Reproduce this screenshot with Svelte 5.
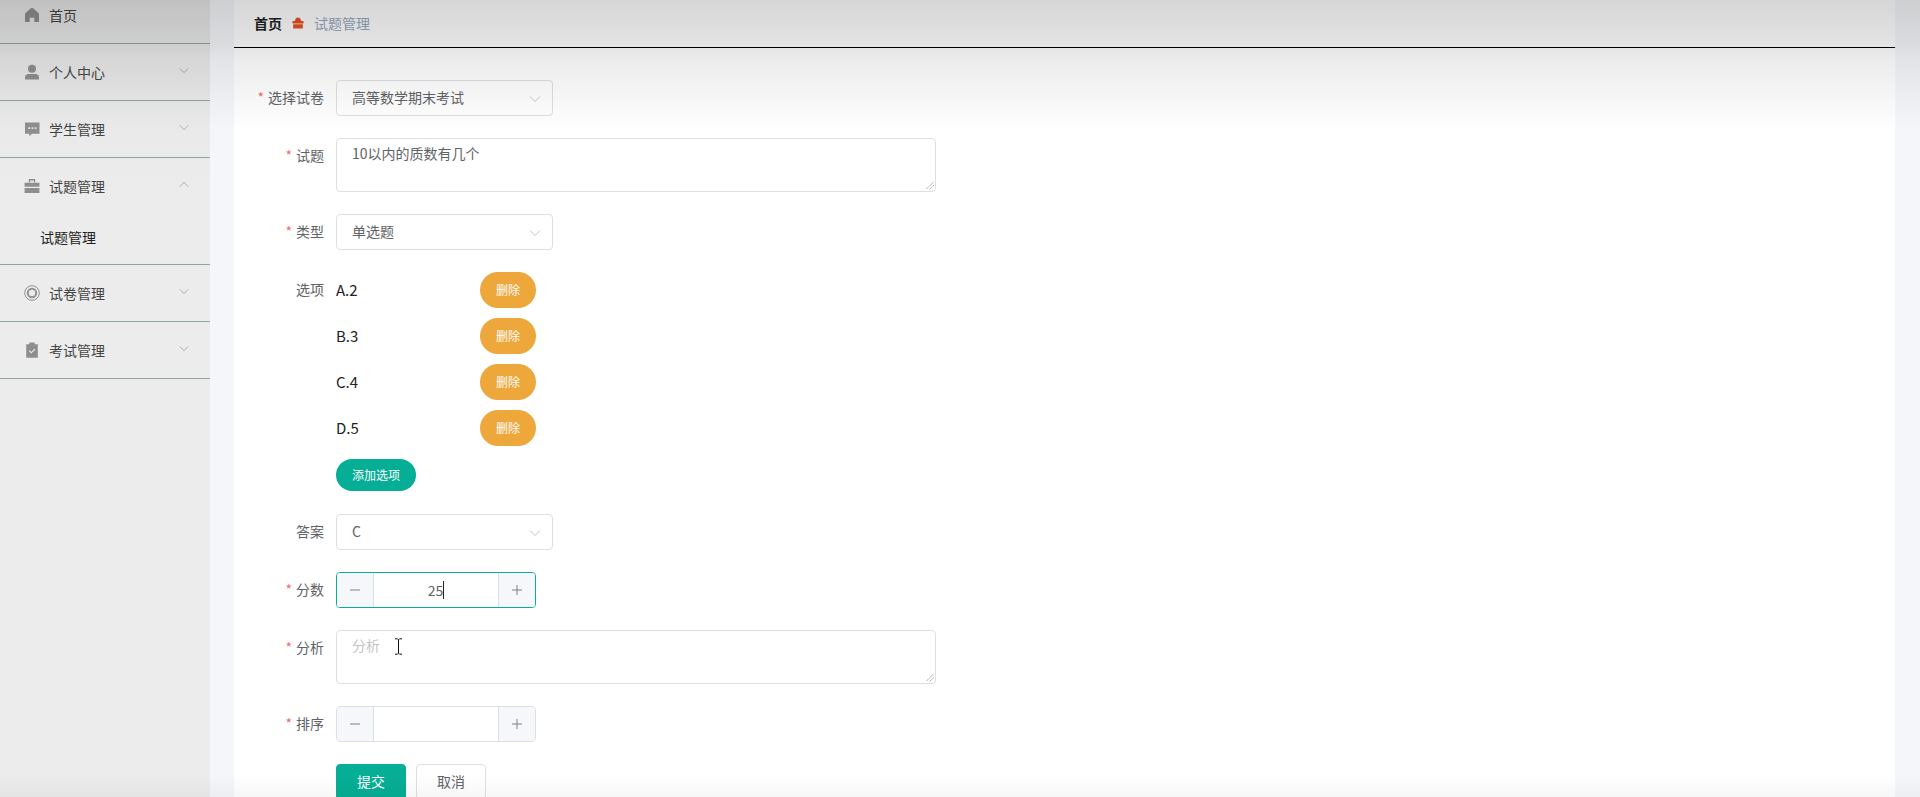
<script>
	const menu = [
		{ name: '个人中心', icon: 'user' },
		{ name: '学生管理', icon: 'chat' },
		{ name: '试题管理', icon: 'case', open: true, children: ['试题管理'] },
		{ name: '试卷管理', icon: 'help' },
		{ name: '考试管理', icon: 'claim' }
	];
	const options = ['A.2', 'B.3', 'C.4', 'D.5'];
</script>

{#snippet icon(kind)}
	<svg class="menu-icon" viewBox="0 0 16 16">
		{#if kind === 'home'}
			<path d="M8 1C7.200 1 6.600 1.400 6 1.900L1 6.400V15h4.700v-4.200h4.600V15H15V6.400L10 1.900C9.400 1.400 8.800 1 8 1z" />
		{:else if kind === 'user'}
			<circle cx="8" cy="4.700" r="4" />
			<path d="M1 15.500v-2.300C1 11 2.800 10 5 10h6c2.200 0 4 1 4 3.200v2.300z" />
		{:else if kind === 'chat'}
			<path fill-rule="evenodd" d="M1 1.500h14.500v11.200H8L5.300 15.500v-2.800H1zM4.300 6.300v1.700H6V6.300zm3.200 0v1.700h1.700V6.300zm3.200 0v1.700h1.700V6.300z" />
		{:else if kind === 'case'}
			<path d="M4.800 1h6.400v3.200H9.800V2.400H6.200v1.800H4.800zM.6 4.800h14.800v4H.6zM.6 10h14.800v5H.6z" />
		{:else if kind === 'help'}
			<circle cx="8" cy="8" r="7.300" fill="none" stroke="#929292" stroke-width="1" />
			<circle cx="8" cy="8" r="4.200" fill="none" stroke="#929292" stroke-width="2" />
		{:else}
			<path fill-rule="evenodd" d="M5.300 .5h5.400v1.800h3.100v13.400H2.200V2.300h3.100zM4.800 9l2.500 2.500 4-4-.8-.8-3.200 3.200-1.700-1.700z" />
		{/if}
	</svg>
{/snippet}

{#snippet arrow(up)}
	<svg class="arrow" class:up viewBox="0 0 12 8">
		<path d="M1 1.500 6 6.500 11 1.500" />
	</svg>
{/snippet}

{#snippet select(value)}
	<div class="select">
		<span>{value}</span>
		<svg class="select-arrow" viewBox="0 0 12 8"><path d="M1 1.500 6 6.500 11 1.500" /></svg>
	</div>
{/snippet}

{#snippet stepper(value, focused)}
	<div class="stepper" class:focused>
		<span class="step">
			<svg viewBox="0 0 12 12"><path d="M1 6h10" /></svg>
		</span>
		<span class="step-value">
			{value}{#if focused}<i class="caret"></i>{/if}
		</span>
		<span class="step">
			<svg viewBox="0 0 12 12"><path d="M1 6h10M6 1v10" /></svg>
		</span>
	</div>
{/snippet}

<div class="page">
	<aside class="sidebar">
		<div class="menu-row first">
			{@render icon('home')}
			<span>首页</span>
		</div>
		{#each menu as item}
			<div class="menu-group">
				<div class="menu-row">
					{@render icon(item.icon)}
					<span>{item.name}</span>
					{@render arrow(item.open)}
				</div>
				{#if item.children}
					{#each item.children as child}
						<div class="submenu">{child}</div>
					{/each}
				{/if}
			</div>
		{/each}
	</aside>

	<main class="main">
		<header class="crumbs">
			<b>首页</b>
			<svg class="crumb-icon" viewBox="0 0 12 12">
				<path d="M3 4C3 1.600 4.400 .4 6 .4S9 1.600 9 4h2.500v2.400H.5V4zM1.200 7.300h9.600V11.600H1.200z" />
			</svg>
			<span>试题管理</span>
		</header>

		<form class="form">
			<div class="row">
				<div class="label"><em>*</em>选择试卷</div>
				{@render select('高等数学期末考试')}
			</div>
			<div class="row">
				<div class="label"><em>*</em>试题</div>
				<div class="textarea">10以内的质数有几个
					<svg class="resize" viewBox="0 0 10 10"><path d="M9.500 1 1 9.500M9.500 5 5 9.500" /></svg>
				</div>
			</div>
			<div class="row">
				<div class="label"><em>*</em>类型</div>
				{@render select('单选题')}
			</div>
			<div class="row options">
				<div class="label">选项</div>
				<div class="option-list">
					{#each options as opt}
						<div class="option">
							<span>{opt}</span>
							<button type="button" class="btn-del">删除</button>
						</div>
					{/each}
					<button type="button" class="btn-add">添加选项</button>
				</div>
			</div>
			<div class="row">
				<div class="label">答案</div>
				{@render select('C')}
			</div>
			<div class="row">
				<div class="label"><em>*</em>分数</div>
				{@render stepper('25', true)}
			</div>
			<div class="row">
				<div class="label"><em>*</em>分析</div>
				<div class="textarea placeholder">分析
					<svg class="ibeam" viewBox="0 0 9 17"><path d="M1 .8h2.500L4.500 1.800 5.500 .8H8M4.500 1.800v13.400M1 16.200h2.500l1-1 1 1H8" /></svg>
					<svg class="resize" viewBox="0 0 10 10"><path d="M9.500 1 1 9.500M9.500 5 5 9.500" /></svg>
				</div>
			</div>
			<div class="row">
				<div class="label"><em>*</em>排序</div>
				{@render stepper('', false)}
			</div>
			<div class="row actions">
				<button type="button" class="btn-submit">提交</button>
				<button type="button" class="btn-cancel">取消</button>
			</div>
		</form>
	</main>

	<div class="shade"></div>
</div>

<style>
	:global(body) {
		margin: 0;
		overflow: hidden;
		background: #f3f5f8;
		font-family: "Noto Sans CJK SC", "Noto Sans", sans-serif;
	}

	.page {
		position: relative;
		display: flex;
		height: 797px;
		overflow: hidden;
		background: #f4f6f9;
	}

	/* grey fade that sits on top of everything */
	.shade {
		position: absolute;
		inset: 0;
		pointer-events: none;
		background:
			linear-gradient(to bottom, rgba(0, 0, 0, 0) 775px, rgba(0, 0, 0, 0.035) 797px),
			linear-gradient(to bottom, rgba(0, 0, 0, 0.16) 0, rgba(0, 0, 0, 0.105) 47px, rgba(0, 0, 0, 0.08) 57px, rgba(0, 0, 0, 0) 130px);
	}

	.sidebar {
		width: 210px;
		flex: none;
		background: linear-gradient(to bottom, #e6e6e6 0, #ececec 200px);
	}

	.menu-row {
		display: flex;
		align-items: center;
		height: 56px;
		padding: 0 20px 0 24px;
		border-bottom: 1px solid #8fa39f;
		font-size: 14px;
		color: #444;
	}

	.menu-row.first {
		margin-top: -13px;
	}

	.menu-group {
		border-bottom: 1px solid #8fa39f;
	}

	.menu-group .menu-row {
		border-bottom: 0;
	}

	.menu-icon {
		width: 16px;
		height: 16px;
		margin-right: 9px;
		fill: #8e8e8e;
		flex: none;
	}

	.arrow {
		width: 10px;
		height: 7px;
		margin-left: auto;
		margin-top: -3px;
		margin-right: 1px;
	}

	.arrow path {
		fill: none;
		stroke: #86a8a2;
		stroke-width: 1;
	}

	.arrow.up {
		transform: scaleY(-1);
	}

	.submenu {
		height: 50px;
		padding-left: 40px;
		line-height: 46px;
		font-size: 14px;
		color: #222;
	}

	.main {
		width: 1661px;
		flex: none;
		margin-left: 24px;
		background: #fff;
	}

	.crumbs {
		display: flex;
		align-items: center;
		box-sizing: border-box;
		height: 48px;
		padding: 0 0 2px 20px;
		border-bottom: 1px solid #000;
		font-size: 14px;
		color: #97a8be;
	}

	.crumbs b {
		color: #222;
		font-weight: 700;
	}

	.crumb-icon {
		width: 12px;
		height: 12px;
		margin: 0 10px;
		fill: #e8501f;
	}

	.form {
		padding-top: 32px;
		font-size: 14px;
		color: #606266;
	}

	.row {
		display: flex;
		margin-bottom: 22px;
	}

	.label {
		width: 90px;
		margin-right: 12px;
		height: 36px;
		line-height: 34px;
		text-align: right;
		flex: none;
	}

	.label em {
		color: #f56c6c;
		font-style: normal;
		margin-right: 4px;
	}

	.select {
		position: relative;
		display: flex;
		align-items: center;
		box-sizing: border-box;
		width: 217px;
		height: 36px;
		padding: 0 0 2px 15px;
		border: 1px solid #dcdfe6;
		border-radius: 4px;
		background: #fff;
	}

	.select-arrow {
		position: absolute;
		right: 11px;
		top: 14px;
		width: 12px;
		height: 8px;
	}

	.select-arrow path {
		fill: none;
		stroke: #c0c4cc;
		stroke-width: 1;
	}

	.textarea {
		position: relative;
		box-sizing: border-box;
		width: 600px;
		height: 54px;
		padding: 2px 15px;
		line-height: 24px;
		border: 1px solid #dcdfe6;
		border-radius: 4px;
		background: #fff;
	}

	.placeholder {
		color: #c4c4c4;
	}

	.resize {
		position: absolute;
		right: 1px;
		bottom: 1px;
		width: 9px;
		height: 9px;
	}

	.resize path {
		fill: none;
		stroke: #666;
		stroke-width: 1;
		stroke-dasharray: 1 1;
	}

	.ibeam {
		position: absolute;
		left: 57px;
		top: 7px;
		width: 9px;
		height: 17px;
	}

	.ibeam path {
		fill: #fff;
		stroke: #111;
		stroke-width: 1;
	}

	.options {
		margin-bottom: 23px;
	}

	.option-list {
		display: flex;
		flex-direction: column;
		align-items: flex-start;
	}

	.option {
		display: flex;
		align-items: center;
		height: 36px;
		margin-bottom: 10px;
		color: #222;
		font-size: 15px;
	}

	.option span {
		width: 144px;
		padding-bottom: 2px;
	}

	button {
		font: inherit;
		padding: 0 0 2px;
		cursor: pointer;
	}

	.btn-del {
		width: 56px;
		height: 36px;
		border: 0;
		border-radius: 18px;
		background: #eda73a;
		color: #fff;
		font-size: 12px;
	}

	.btn-add {
		width: 80px;
		height: 32px;
		margin-top: 3px;
		border: 0;
		border-radius: 16px;
		background: #05ae94;
		color: #fff;
		font-size: 12px;
	}

	.stepper {
		display: flex;
		box-sizing: border-box;
		width: 200px;
		height: 36px;
		border: 1px solid #dcdfe6;
		border-radius: 4px;
		overflow: hidden;
		background: #fff;
	}

	.stepper.focused {
		border-color: #05ae94;
	}

	.step {
		display: flex;
		align-items: center;
		justify-content: center;
		width: 36px;
		flex: none;
		background: #f5f7fa;
	}

	.step:first-child {
		border-right: 1px solid #dcdfe6;
	}

	.step:last-child {
		border-left: 1px solid #dcdfe6;
	}

	.step svg {
		width: 12px;
		height: 12px;
	}

	.step path {
		fill: none;
		stroke: #7d8087;
		stroke-width: 1;
	}

	.step-value {
		flex: 1;
		display: flex;
		align-items: center;
		justify-content: center;
		color: #606266;
	}

	.caret {
		display: block;
		width: 1px;
		height: 18px;
		background: #222;
	}

	.actions {
		padding-left: 102px;
		gap: 10px;
	}

	.btn-submit,
	.btn-cancel {
		width: 70px;
		height: 36px;
		border-radius: 4px;
		font-size: 14px;
	}

	.btn-submit {
		border: 1px solid #05ae94;
		background: #05ae94;
		color: #fff;
	}

	.btn-cancel {
		border: 1px solid #dcdfe6;
		background: #fff;
		color: #606266;
	}
</style>
